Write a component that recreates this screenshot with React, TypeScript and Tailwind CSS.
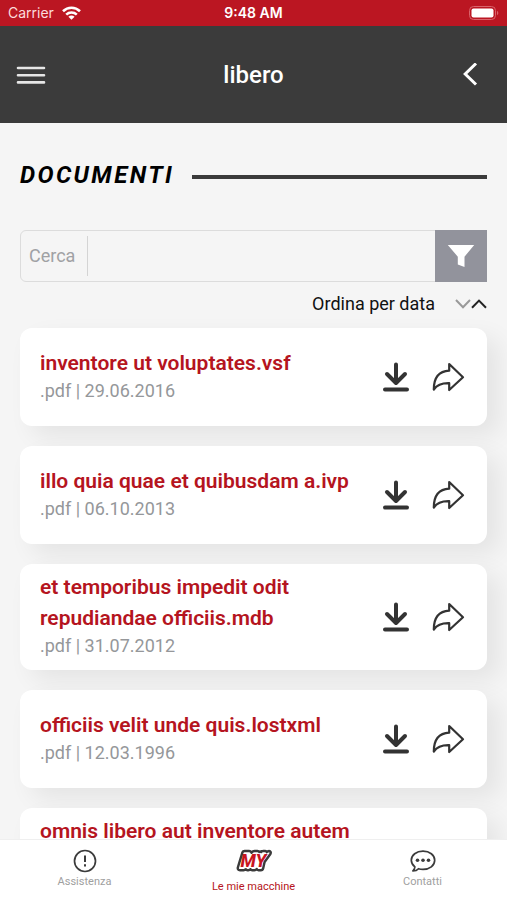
import React, { useState } from "react";

type Doc = { title: string; date: string };

const docs: Doc[] = [
  { title: "inventore ut voluptates.vsf", date: "29.06.2016" },
  { title: "illo quia quae et quibusdam a.ivp", date: "06.10.2013" },
  { title: "et temporibus impedit odit repudiandae officiis.mdb", date: "31.07.2012" },
  { title: "officiis velit unde quis.lostxml", date: "12.03.1996" },
  { title: "omnis libero aut inventore autem voluptas.pdf", date: "18.09.2008" },
];

function StatusBar() {
  return (
    <div className="grid h-[26px] shrink-0 grid-cols-3 items-center bg-[#bb1622] px-2 font-['Inter',sans-serif] text-sm text-white">
      <div className="flex items-center gap-2 text-[#fbdcdc]">
        <span>Carrier</span>
        <svg width="19" height="14" viewBox="0 0 19 14" fill="none" stroke="#fff" strokeWidth="2.6" aria-hidden="true">
          <path d="M1 5.2C5.8.6 13.2.6 18 5.2" />
          <path d="M4.2 8.6c3-2.8 7.6-2.8 10.6 0" />
          <path d="M9.5 13.8 6.4 10.8c1.8-1.6 4.4-1.6 6.2 0Z" fill="#fff" stroke="none" />
        </svg>
      </div>
      <span className="text-center font-semibold">9:48 AM</span>
      <svg className="justify-self-end" width="30" height="14" viewBox="0 0 30 14" aria-hidden="true">
        <rect x=".5" y=".5" width="26" height="13" rx="4" fill="none" stroke="#d9636b" />
        <rect x="2.5" y="2.5" width="22" height="9" rx="2" fill="#fff" />
        <path d="M28 4.8c1.8.8 1.8 3.6 0 4.4Z" fill="#d9636b" />
      </svg>
    </div>
  );
}

function Header() {
  return (
    <header className="flex h-[97px] shrink-0 items-center justify-between bg-[#3b3b3b] px-4 text-white">
      <button type="button" aria-label="Menu" className="flex h-8 w-10 items-center">
        <svg width="30" height="20" viewBox="0 0 30 20" stroke="#e6e6e6" strokeWidth="2.6" strokeLinecap="round" aria-hidden="true">
          <path d="M2 3h26M2 10.2h26M2 17.4h26" />
        </svg>
      </button>
      <h1 className="text-2xl font-medium">libero</h1>
      <button type="button" aria-label="Indietro" className="flex h-8 w-10 items-center justify-center">
        <svg width="16" height="24" viewBox="0 0 16 24" fill="none" stroke="#fff" strokeWidth="3" aria-hidden="true">
          <path d="M13 .5 2.200 11 13 21.500" />
        </svg>
      </button>
    </header>
  );
}

function DocumentCard({ doc }: { doc: Doc }) {
  return (
    <li className="flex min-h-[98px] items-center rounded-xl bg-white pr-[22px] pl-5 shadow-[12px_10px_24px_rgba(0,0,0,0.07)]">
      <div className="min-w-0 flex-1 pt-2 pr-3 pb-3">
        <h3 className="text-[21px] leading-[31px] font-semibold text-[#b51420]">{doc.title}</h3>
        <p className="text-lg leading-6 text-[#95979a]">.pdf | {doc.date}</p>
      </div>
      <div className="flex shrink-0 items-center gap-[22px]">
        <button type="button" aria-label={"Scarica " + doc.title}>
          <svg width="28" height="30" viewBox="0 0 28 30" fill="none" stroke="#333" strokeWidth="4" strokeLinecap="round" strokeLinejoin="round" aria-hidden="true">
            <path d="M14 2.5V20M5 12l9 9 9-9M3 27.6h22" />
          </svg>
        </button>
        <button type="button" aria-label={"Condividi " + doc.title}>
          <svg width="33" height="30" viewBox="0 0 33 30" fill="none" stroke="#333" strokeWidth="2.2" strokeLinejoin="round" aria-hidden="true">
            <path d="M17.2 2 31 15.2 17.2 28v-6.8C10 21 5 22.800 1.800 27.600 1.800 16 7 9.200 17.200 8.700Z" />
          </svg>
        </button>
      </div>
    </li>
  );
}

function BottomNav() {
  return (
    <nav className="grid h-[61px] shrink-0 grid-cols-3 border-t border-[#efefef] bg-white text-[11px] leading-4 text-[#a0a0a0]">
      <a href="#assistenza" className="flex flex-col items-center gap-px pt-[9px]">
        <svg width="24" height="24" viewBox="0 0 24 24" fill="none" stroke="#3b3b3b" aria-hidden="true">
          <circle cx="12" cy="12" r="10.500" strokeWidth="1.700" />
          <path d="M12 6.500v6.500M12 15.200v2.200" strokeWidth="2" />
        </svg>
        <span>Assistenza</span>
      </a>
      <a href="#macchine" aria-current="page" className="flex flex-col items-center gap-1.5 pt-[9px] text-[#b51420]">
        <svg width="36" height="24" viewBox="0 0 36 24" aria-hidden="true" strokeLinejoin="round">
          <path
            d="M6.500 3.200Q7 2 8.500 2h4.500q2 0 2.500 1.800Q16.800 2 18.500 2h3q1.200 0 1.700 1 .8-1 2 0 .5-1 2-1h2q1.200 0 1.600 1.200Q31.600 2 33 2q2.600.3 1.400 3L28.600 13l-1.400 6.200q-.4 2-2.400 2h-2.300q-1.400 0-1.700-1.200-1 1.200-2.400 1.200h-2.200q-1.200 0-1.600-1-1.200 1.200-2.600 1h-.6q-1 0-1.600-1-1 1-2.200 1H4q-2.600-.2-2.200-2.600Z"
            fill="#fff"
            stroke="#3b3b3b"
            strokeWidth="2.400"
          />
          <text
            x="17.500"
            y="18"
            textAnchor="middle"
            fontFamily="Roboto, sans-serif"
            fontWeight="800"
            fontStyle="italic"
            fontSize="18"
            fill="#c8151f"
          >
            MY
          </text>
        </svg>
        <span>Le mie macchine</span>
      </a>
      <a href="#contatti" className="flex flex-col items-center gap-px pt-[9px]">
        <svg width="26" height="24" viewBox="0 0 26 24" fill="none" stroke="#3b3b3b" strokeWidth="1.700" strokeLinejoin="round" aria-hidden="true">
          <path d="M13 2.200C6.400 2.200 1.300 6 1.300 11.300c0 3 1.500 5 3.600 6.600-.2 1.800-.8 3-2 4 2.500 0 4.400-.8 5.600-2.200 1.400.5 2.900.7 4.500.7 6.600 0 11.700-3.800 11.700-9.100S19.600 2.200 13 2.200Z" />
          <g fill="#3b3b3b" stroke="none">
            <circle cx="7.500" cy="11.300" r="1.800" />
            <circle cx="13" cy="11.300" r="1.800" />
            <circle cx="18.500" cy="11.300" r="1.800" />
          </g>
        </svg>
        <span>Contatti</span>
      </a>
    </nav>
  );
}

export default function App() {
  const [query, setQuery] = useState("");
  const shown = docs.filter((d) => d.title.includes(query.toLowerCase()));

  return (
    <div className="flex h-screen flex-col overflow-hidden bg-[#f5f5f5] font-['Roboto',sans-serif]">
      <StatusBar />
      <Header />
      <main className="min-h-0 flex-1 overflow-y-auto px-5 pt-9 pb-5 [scrollbar-width:none]">
        <div className="flex items-center gap-[18px]">
          <h2 className="text-2xl font-bold tracking-widest text-black italic">DOCUMENTI</h2>
          <div className="mt-1 h-1 flex-1 bg-[#3b3b3b]" />
        </div>

        <div className="mt-[39px] flex h-[52px] items-center rounded-l-md border border-[#dcdcdc]">
          <label htmlFor="search" className="pr-3 pl-2 text-lg text-[#a0a1a4]">
            Cerca
          </label>
          <div className="h-10 w-px bg-[#d4d4d4]" />
          <input
            id="search"
            type="text"
            value={query}
            onChange={(e) => setQuery(e.target.value)}
            className="h-full min-w-0 flex-1 bg-transparent px-3 text-lg outline-none"
          />
          <button type="button" aria-label="Filtra" className="-my-px -mr-px flex h-[52px] w-[52px] items-center justify-center bg-[#92939c]">
            <svg width="28" height="24" viewBox="0 0 28 24" fill="#fff" aria-hidden="true">
              <path d="M.8 1h26.400L17.500 12.700v10.300l-6.700-2.500v-7.800Z" />
            </svg>
          </button>
        </div>

        <div className="mt-2 flex items-center justify-end gap-5 text-lg text-[#111]">
          <span>Ordina per data</span>
          <button type="button" aria-label="Cambia ordine">
            <svg width="32" height="12" viewBox="0 0 32 12" fill="none" strokeWidth="2" aria-hidden="true">
              <path d="m1 2 7 7.200L15 2" stroke="#999" />
              <path d="m17 9.800 7-7.200 7 7.200" stroke="#222" />
            </svg>
          </button>
        </div>

        <ul className="mt-[10px] flex flex-col gap-5">
          {shown.map((doc) => (
            <DocumentCard key={doc.title} doc={doc} />
          ))}
        </ul>
      </main>
      <BottomNav />
    </div>
  );
}
